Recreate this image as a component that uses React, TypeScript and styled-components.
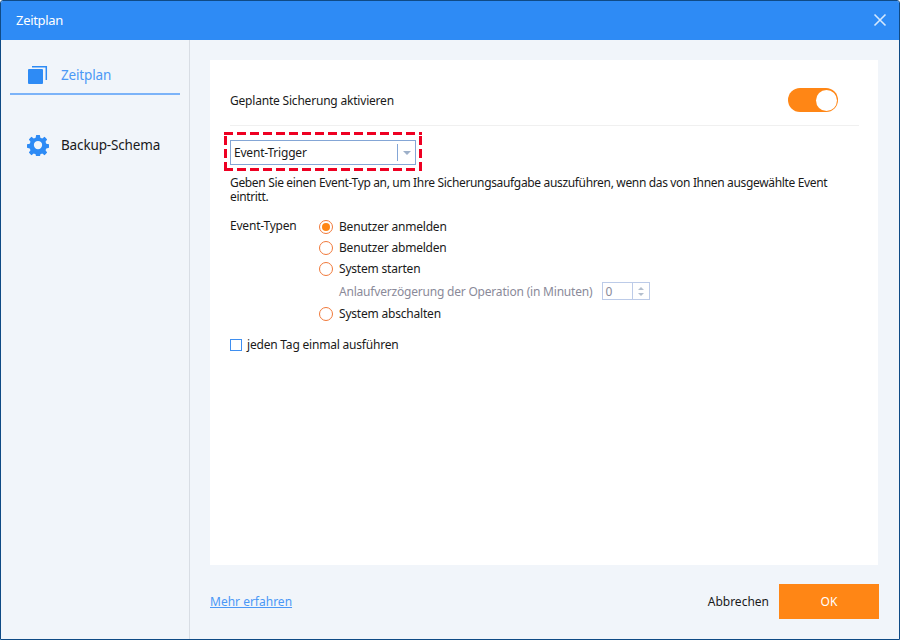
import React from "react";
import styled, { createGlobalStyle } from "styled-components";

const GlobalStyle = createGlobalStyle`
  html, body {
    margin: 0;
    padding: 0;
    background: #fff;
  }
  * {
    box-sizing: border-box;
  }
`;

const Window = styled.div`
  width: 900px;
  height: 640px;
  display: flex;
  flex-direction: column;
  border: 1px solid #0f4a85;
  border-top-left-radius: 3px;
  border-top-right-radius: 3px;
  background: #f1f5fa;
  font-family: "Noto Sans", "DejaVu Sans", sans-serif;
  font-size: 12px;
  letter-spacing: -0.2px;
  color: #1a1a1a;
  overflow: hidden;
`;

const TitleBar = styled.div`
  height: 39px;
  flex: none;
  display: flex;
  align-items: center;
  justify-content: space-between;
  padding: 0 12px 2px 15px;
  background: #2e8bf5;
  color: #fff;
  font-size: 13px;
  letter-spacing: -0.3px;
`;

const CloseButton = styled.button`
  width: 14px;
  height: 14px;
  padding: 0;
  border: none;
  background: none;
  display: flex;
`;

const Body = styled.div`
  flex: 1;
  display: flex;
  min-height: 0;
`;

const Sidebar = styled.nav`
  width: 189px;
  flex: none;
  border-right: 1px solid #d8dde4;
  padding: 16px 9px 0;
`;

const NavItem = styled.div<{ $active?: boolean }>`
  height: 39px;
  margin-bottom: 31px;
  display: flex;
  align-items: center;
  gap: 12px;
  padding-left: 17px;
  font-size: 13.5px;
  letter-spacing: -0.15px;
  color: ${(p) => (p.$active ? "#4b98f6" : "#1a1a1a")};
  border-bottom: 2px solid ${(p) => (p.$active ? "#7cb3f8" : "transparent")};
`;

const Main = styled.main`
  flex: 1;
  display: flex;
  flex-direction: column;
  padding: 20px 21px 0 20px;
`;

const Panel = styled.section`
  height: 505px;
  background: #fff;
  padding: 15px 19px 0 20px;
`;

const ToggleRow = styled.div`
  height: 51px;
  display: flex;
  align-items: center;
  justify-content: space-between;
  padding-right: 21px;
  border-bottom: 1px solid #f0f0f0;
`;

const Toggle = styled.div`
  width: 50px;
  height: 24px;
  border-radius: 12px;
  background: #ff8615;
  display: flex;
  justify-content: flex-end;
  align-items: center;
  padding-right: 1px;
`;

const Knob = styled.div`
  width: 21px;
  height: 21px;
  border-radius: 50%;
  background: #fff;
`;

const Highlight = styled.div`
  width: 198px;
  height: 39px;
  margin: 6px 0 0 -6px;
  padding: 8px 0 0 6px;
  background:
    repeating-linear-gradient(90deg, #ee0022 0 9px, transparent 9px 13px) top / 100% 3px no-repeat,
    repeating-linear-gradient(90deg, #ee0022 0 9px, transparent 9px 13px) bottom / 100% 3px no-repeat,
    repeating-linear-gradient(0deg, #ee0022 0 9px, transparent 9px 13px) left / 3px 100% no-repeat,
    repeating-linear-gradient(0deg, #ee0022 0 9px, transparent 9px 13px) right / 3px 100% no-repeat;
`;

const Select = styled.div`
  width: 186px;
  height: 25px;
  display: flex;
  align-items: center;
  justify-content: space-between;
  border: 1px solid #84a6d6;
  background: #fff;
  padding-left: 3px;
`;

const SelectArrow = styled.div`
  width: 18px;
  height: 17px;
  border-left: 1px solid #84a6d6;
  display: flex;
  align-items: center;
  justify-content: center;

  &::after {
    content: "";
    border-left: 4px solid transparent;
    border-right: 4px solid transparent;
    border-top: 4px solid #9db0c9;
  }
`;

const Hint = styled.p`
  margin: 5px 0 0;
  line-height: 14px;
  letter-spacing: -0.34px;
  white-space: nowrap;
`;

const EventSection = styled.div`
  display: flex;
  margin-top: 12px;
`;

const EventLabel = styled.div`
  width: 89px;
  line-height: 14px;
  padding-top: 3px;
`;

const RadioList = styled.div`
  display: flex;
  flex-direction: column;
`;

const RadioRow = styled.label`
  height: 21px;
  display: flex;
  align-items: center;
  gap: 6px;
`;

const RadioMark = styled.span<{ $checked?: boolean }>`
  width: 14px;
  height: 14px;
  border-radius: 50%;
  border: 1px solid #f0793a;
  display: flex;
  align-items: center;
  justify-content: center;

  &::after {
    content: "";
    width: 8px;
    height: 8px;
    border-radius: 50%;
    background: ${(p) => (p.$checked ? "#ff8615" : "transparent")};
  }
`;

const DelayRow = styled.div`
  height: 24px;
  display: flex;
  align-items: center;
  gap: 10px;
  padding-left: 20px;
  color: #8a8a99;
`;

const Spinner = styled.div`
  width: 48px;
  height: 18px;
  display: flex;
  justify-content: space-between;
  align-items: center;
  border: 1px solid #bccbe8;
  padding-left: 2px;
`;

const SpinnerArrows = styled.div`
  width: 17px;
  height: 16px;
  border-left: 1px solid #bccbe8;
  display: flex;
  flex-direction: column;
  align-items: center;
  justify-content: center;
  gap: 3px;
`;

const SpinnerArrow = styled.span<{ $down?: boolean }>`
  border-left: 3px solid transparent;
  border-right: 3px solid transparent;
  ${(p) => (p.$down ? "border-top" : "border-bottom")}: 3px solid #b4bfce;
`;

const CheckRow = styled.label`
  display: flex;
  align-items: center;
  gap: 5px;
  margin-top: 12px;
`;

const CheckBox = styled.span`
  width: 12px;
  height: 12px;
  border: 1px solid #3f8ff0;
`;

const Footer = styled.div`
  flex: 1;
  display: flex;
  align-items: center;
  justify-content: space-between;
  margin-right: -1px;
  padding-bottom: 2px;
`;

const LearnMore = styled.a`
  color: #4b98f6;
  text-decoration: underline;
  letter-spacing: 0;
`;

const Actions = styled.div`
  display: flex;
  align-items: center;
  gap: 10px;
  letter-spacing: 0;
`;

const CancelButton = styled.button`
  border: none;
  background: none;
  padding: 0;
  font: inherit;
  color: #1a1a1a;
`;

const OkButton = styled.button`
  width: 100px;
  height: 35px;
  border: none;
  background: #ff8615;
  color: #fff;
  font: inherit;
`;

const events = [
  { label: "Benutzer anmelden", checked: true },
  { label: "Benutzer abmelden" },
  { label: "System starten" },
];

const App = () => (
  <React.Fragment>
    <GlobalStyle />
    <Window>
      <TitleBar>
        Zeitplan
        <CloseButton aria-label="Schließen">
          <svg width="14" height="14" viewBox="0 0 14 14">
            <path d="M1.5 1.5 L12.5 12.5 M12.5 1.5 L1.5 12.5" stroke="#d5e8fd" strokeWidth="1.6" fill="none" />
          </svg>
        </CloseButton>
      </TitleBar>
      <Body>
        <Sidebar>
          <NavItem $active>
            <svg width="22" height="20" viewBox="0 0 22 20">
              <rect x="1" y="4" width="15" height="15" rx="1" fill="#2e8bf5" />
              <path d="M5 1.700 H19.300 V15" stroke="#2e8bf5" strokeWidth="1.5" fill="none" />
            </svg>
            Zeitplan
          </NavItem>
          <NavItem>
            <svg width="22" height="22" viewBox="0 0 24 24" fill="#2e8bf5">
              <path
                fillRule="evenodd"
                d="M10 1h4l.6 3.1 2 .8 2.6-1.800 2.800 2.800-1.800 2.600.8 2 3 .6v4l-3 .6-.8 2 1.800 2.600-2.800 2.800-2.600-1.800-2 .8-.6 3h-4l-.6-3-2-.8-2.600 1.800-2.800-2.800 1.800-2.600-.8-2-3.100-.6v-4l3.100-.6.8-2-1.800-2.600 2.800-2.800 2.600 1.800 2-.8zM12 7.500a4.500 4.500 0 1 0 0 9 4.500 4.500 0 0 0 0-9z"
              />
            </svg>
            Backup-Schema
          </NavItem>
        </Sidebar>
        <Main>
          <Panel>
            <ToggleRow>
              Geplante Sicherung aktivieren
              <Toggle>
                <Knob />
              </Toggle>
            </ToggleRow>
            <Highlight>
              <Select>
                Event-Trigger
                <SelectArrow />
              </Select>
            </Highlight>
            <Hint>
              Geben Sie einen Event-Typ an, um Ihre Sicherungsaufgabe auszuführen, wenn das von Ihnen ausgewählte Event
              <br />
              eintritt.
            </Hint>
            <EventSection>
              <EventLabel>Event-Typen</EventLabel>
              <RadioList>
                {events.map((e) => (
                  <RadioRow key={e.label}>
                    <RadioMark $checked={e.checked} />
                    {e.label}
                  </RadioRow>
                ))}
                <DelayRow>
                  Anlaufverzögerung der Operation (in Minuten)
                  <Spinner>
                    0
                    <SpinnerArrows>
                      <SpinnerArrow />
                      <SpinnerArrow $down />
                    </SpinnerArrows>
                  </Spinner>
                </DelayRow>
                <RadioRow>
                  <RadioMark />
                  System abschalten
                </RadioRow>
              </RadioList>
            </EventSection>
            <CheckRow>
              <CheckBox />
              jeden Tag einmal ausführen
            </CheckRow>
          </Panel>
          <Footer>
            <LearnMore>Mehr erfahren</LearnMore>
            <Actions>
              <CancelButton>Abbrechen</CancelButton>
              <OkButton>OK</OkButton>
            </Actions>
          </Footer>
        </Main>
      </Body>
    </Window>
  </React.Fragment>
);

export default App;
